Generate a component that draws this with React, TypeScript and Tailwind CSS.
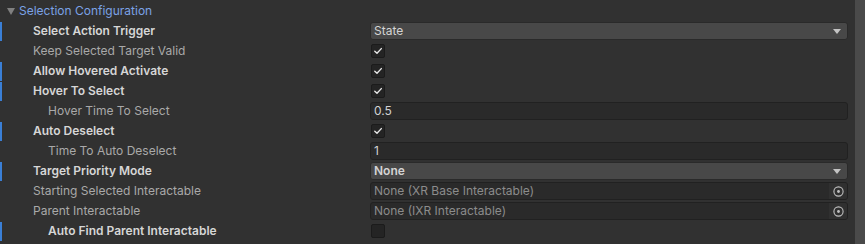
import React from "react";

type Row = {
  label: string;
  bold?: boolean;
  indent?: boolean;
  modified?: boolean;
  kind: "dropdown" | "check" | "text" | "object";
  value?: string;
  checked?: boolean;
};

const rows: Row[] = [
  { label: "Select Action Trigger", bold: true, modified: true, kind: "dropdown", value: "State" },
  { label: "Keep Selected Target Valid", kind: "check", checked: true },
  { label: "Allow Hovered Activate", bold: true, modified: true, kind: "check", checked: true },
  { label: "Hover To Select", bold: true, modified: true, kind: "check", checked: true },
  { label: "Hover Time To Select", indent: true, kind: "text", value: "0.5" },
  { label: "Auto Deselect", bold: true, modified: true, kind: "check", checked: true },
  { label: "Time To Auto Deselect", indent: true, kind: "text", value: "1" },
  { label: "Target Priority Mode", bold: true, modified: true, kind: "dropdown", value: "None" },
  { label: "Starting Selected Interactable", kind: "object", value: "None (XR Base Interactable)" },
  { label: "Parent Interactable", kind: "object", value: "None (IXR Interactable)" },
  { label: "Auto Find Parent Interactable", bold: true, indent: true, modified: true, kind: "check", checked: false },
];

const Check = () => (
  <svg width="10" height="10" viewBox="0 0 10 10" fill="none">
    <path d="M1.8 5.2 L4 7.3 L8.3 2.6" stroke="#e6e6e6" strokeWidth="1.4" strokeLinecap="round" strokeLinejoin="round" />
  </svg>
);

const Field = ({ row }: { row: Row }) => {
  if (row.kind === "check") {
    return (
      <div className="w-[14px] h-[14px] ml-px rounded-[2px] bg-[#242424] border border-[#1b1b1b] flex items-center justify-center">
        {row.checked && <Check />}
      </div>
    );
  }
  if (row.kind === "dropdown") {
    return (
      <div className="flex-1 h-[18px] rounded-[3px] bg-[#484848] border border-[#2a2a2a] flex items-center px-[3px]">
        <span className={`flex-1 text-[12px] text-[#d4d4d4] ${row.value === "None" ? "font-semibold" : ""}`}>{row.value}</span>
        <svg width="8" height="5" viewBox="0 0 8 5" className="mr-[3px]">
          <path d="M0 0 H8 L4 5 Z" fill="#c4c4c4" />
        </svg>
      </div>
    );
  }
  if (row.kind === "text") {
    return (
      <div className="flex-1 h-[18px] rounded-[3px] bg-[#2a2a2a] border border-[#212121] flex items-center px-[3px]">
        <span className="text-[12px] text-[#d2d2d2]">{row.value}</span>
      </div>
    );
  }
  return (
    <div className="flex-1 h-[18px] rounded-[3px] bg-[#2a2a2a] border border-[#212121] flex items-center pl-[3px] overflow-hidden">
      <span className="flex-1 text-[12px] text-[#8c8c8c]">{row.value}</span>
      <div className="w-[18px] h-full bg-[#303030] flex items-center justify-center">
        <svg width="11" height="11" viewBox="0 0 11 11" fill="none">
          <circle cx="5.5" cy="5.5" r="4.6" stroke="#c0c0c0" strokeWidth="1.1" />
          <circle cx="5.5" cy="5.5" r="1.4" fill="#c0c0c0" />
        </svg>
      </div>
    </div>
  );
};

export default function App() {
  return (
    <div className="w-[865px] h-[244px] bg-[#313131] flex overflow-hidden" style={{ fontFamily: "Inter, 'Noto Sans', sans-serif" }}>
      <div className="flex-1 flex flex-col pt-px">
        {/* Foldout header */}
        <div className="h-5 flex items-center">
          <svg width="8" height="7" viewBox="0 0 8 7" className="ml-[7px] mr-[4px]">
            <path d="M0 0 H8 L4 7 Z" fill="#808080" />
          </svg>
          <span className="text-[12px] text-[#7ba2e6]">Selection Configuration</span>
        </div>

        {rows.map((row) => (
          <div key={row.label} className="h-5 flex items-center">
            <div className={`w-[2px] h-[19px] ${row.modified ? "bg-[#3a7fd6]" : ""}`} />
            <div
              className={`w-[368px] text-[12px] whitespace-nowrap ${row.indent ? "pl-[46px]" : "pl-[31px]"} ${
                row.bold ? "font-semibold text-[#d6d6d6]" : "text-[#a9a9a9]"
              }`}
            >
              {row.label}
            </div>
            <div className="flex-1 flex items-center pr-[7px]">
              <Field row={row} />
            </div>
          </div>
        ))}
      </div>
      {/* scrollbar strip */}
      <div className="w-[10px] bg-[#4a4a4a]" />
    </div>
  );
}
